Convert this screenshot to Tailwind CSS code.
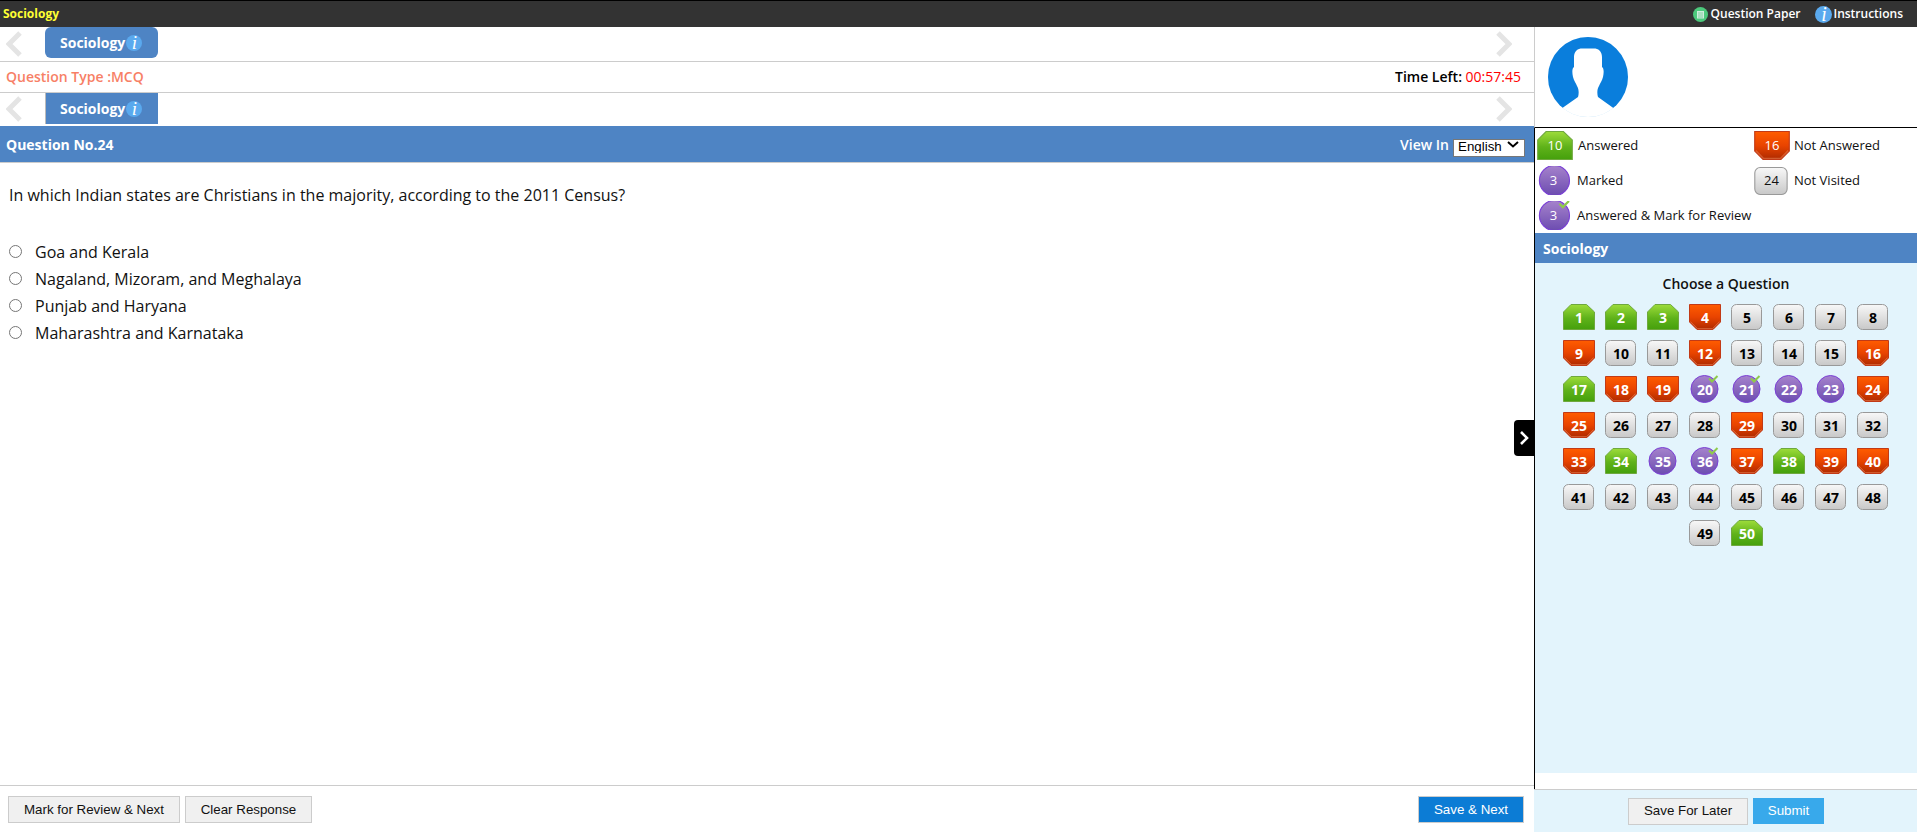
<!DOCTYPE html>
<html lang="en">
<head>
    <meta charset="UTF-8">
    <title>Sociology</title>
    <script src="https://cdn.jsdelivr.net/npm/@tailwindcss/browser@4"></script>
</head>
<body class="bg-white font-['Open_Sans',sans-serif] text-[#111] overflow-hidden">
    <!-- Shared shapes for the question status icons -->
    <svg class="absolute w-0 h-0">
        <defs>
            <linearGradient id="gAns" x1="0" y1="0" x2="0" y2="1"><stop offset="0" stop-color="#9ddc3a"/><stop offset="0.55" stop-color="#5fb21a"/><stop offset="1" stop-color="#45a00c"/></linearGradient>
            <linearGradient id="gNot" x1="0" y1="0" x2="0" y2="1"><stop offset="0" stop-color="#ff5c00"/><stop offset="0.5" stop-color="#e94400"/><stop offset="1" stop-color="#ae2a00"/></linearGradient>
            <linearGradient id="gNew" x1="0" y1="0" x2="0" y2="1"><stop offset="0" stop-color="#f8f8f8"/><stop offset="1" stop-color="#c8c8c8"/></linearGradient>
            <linearGradient id="gMark" x1="0" y1="0" x2="0" y2="1"><stop offset="0" stop-color="#a683cc"/><stop offset="1" stop-color="#6c4cb0"/></linearGradient>
            <symbol id="ans" viewBox="0 0 32 26"><polygon points="0.5,25.5 0.5,8 8,0.5 23.5,0.5 31.5,8 31.5,25.5" fill="url(#gAns)" stroke="#6fa83e"/></symbol>
            <symbol id="not" viewBox="0 0 32 26"><polygon points="0.5,0.5 31.5,0.5 31.5,18 24,25.5 8,25.5 0.5,18" fill="url(#gNot)" stroke="#c23a16"/><polyline points="1.5,17.5 8.5,24.5 23.5,24.5 30.5,17.5" fill="none" stroke="#f08a5a" stroke-opacity="0.5"/></symbol>
            <symbol id="new" viewBox="0 0 32 26"><rect x="0.5" y="0.5" width="30" height="25" rx="5" fill="url(#gNew)" stroke="#999"/></symbol>
            <symbol id="mark" viewBox="0 0 32 26" overflow="visible"><circle cx="15.5" cy="13" r="13.5" fill="url(#gMark)" stroke="#7a3fd6" stroke-width="1"/></symbol>
            <symbol id="done" viewBox="0 0 32 26" overflow="visible"><circle cx="15.5" cy="13" r="13.5" fill="url(#gMark)" stroke="#7a3fd6" stroke-width="1"/><polyline points="20,2.5 23,5.5 28.5,0" fill="none" stroke="#8fca4a" stroke-width="2"/></symbol>
        </defs>
    </svg>

    <!-- Top bar -->
    <header class="h-[27px] bg-[#333] border-t border-black flex items-center justify-between text-white">
        <span class="pl-[3px] text-[12px] font-bold text-[#ffff33]">Sociology</span>
        <div class="flex items-center text-[12px] font-semibold pr-[14px]">
            <svg class="w-[15px] h-[15px] mr-[3px]" viewBox="0 0 15 15"><circle cx="7.5" cy="7.5" r="7.5" fill="#4cc97c"/><rect x="4" y="4" width="7" height="7.5" fill="#cfeedd"/><path d="M5 6h5M5 8h5M5 10h5" stroke="#6fc795" stroke-width="0.8"/></svg>
            <span>Question Paper</span>
            <span class="ml-[15px] w-[17px] h-[17px] rounded-full bg-[#5aa9ee] flex items-center justify-center font-['Liberation_Serif',serif] italic text-[20px] font-normal leading-none">i</span>
            <span class="ml-[1px]">Instructions</span>
        </div>
    </header>

    <main class="relative flex h-[805px]">
        <!-- Question side -->
        <section class="w-[1534px] flex flex-col">
            <div class="h-[35px] border-b border-[#ccc] flex items-center justify-between pl-[6px] pr-[22px]">
                <svg class="w-[16px] h-[26px]" viewBox="0 0 16 26"><polyline points="14,2 3,13 14,24" fill="none" stroke="#e4e4e4" stroke-width="5"/></svg>
                <div class="mr-auto ml-[23px] mt-[-3px] w-[113px] h-[31px] rounded-[6px] bg-[#4e84c4] flex items-center pl-[15px] text-white text-[14px] font-bold">
                    Sociology<span class="ml-[1px] w-[16px] h-[16px] rounded-full bg-[#5aa9ee] flex items-center justify-center font-['Liberation_Serif',serif] italic text-[19px] font-normal leading-none">i</span>
                </div>
                <svg class="w-[16px] h-[26px]" viewBox="0 0 16 26"><polyline points="2,2 13,13 2,24" fill="none" stroke="#e4e4e4" stroke-width="5"/></svg>
            </div>
            <div class="h-[31px] border-b border-[#ccc] flex items-center justify-between pl-[6px] pr-[13px] pb-[2px] text-[14px]">
                <span class="font-semibold text-[#f77f66]">Question Type :MCQ</span>
                <span class="font-semibold text-black">Time Left: <span class="font-medium text-[#ff0000]">00:57:45</span></span>
            </div>
            <div class="h-[33px] flex items-start justify-between pl-[6px] pr-[22px]">
                <svg class="w-[16px] h-[26px] mt-[3px]" viewBox="0 0 16 26"><polyline points="14,2 3,13 14,24" fill="none" stroke="#e4e4e4" stroke-width="5"/></svg>
                <div class="mr-auto ml-[23px] w-[113px] h-[31px] border-l border-[#bbb] bg-[#4e84c4] flex items-center pl-[14px] text-white text-[14px] font-bold">
                    Sociology<span class="ml-[1px] w-[16px] h-[16px] rounded-full bg-[#5aa9ee] flex items-center justify-center font-['Liberation_Serif',serif] italic text-[19px] font-normal leading-none">i</span>
                </div>
                <svg class="w-[16px] h-[26px] mt-[3px]" viewBox="0 0 16 26"><polyline points="2,2 13,13 2,24" fill="none" stroke="#e4e4e4" stroke-width="5"/></svg>
            </div>
            <div class="h-[37px] bg-[#4e84c4] border-b border-[#ccc] flex items-center justify-between pl-[6px] pr-[9px] text-white text-[14px] font-bold">
                <span>Question No.24</span>
                <div class="flex items-center">
                    <span class="font-semibold">View In</span>
                    <div class="relative ml-[4px] w-[72px] h-[18px]">
                        <select class="appearance-none w-full h-full pl-[4px] pb-[2px] bg-white border border-[#777] text-black font-['Liberation_Sans',sans-serif] text-[13.33px] font-normal leading-none">
                            <option>English</option>
                        </select>
                        <svg class="absolute right-[6px] top-[6px] w-[12px] h-[7px] pointer-events-none" viewBox="0 0 12 7"><polyline points="1,1 6,5.5 11,1" fill="none" stroke="#000" stroke-width="2"/></svg>
                    </div>
                </div>
            </div>

            <div class="flex-1 pl-[9px] pt-[21px] text-[16px]">
                <p class="h-[22px] leading-[22px]">In which Indian states are Christians in the majority, according to the 2011 Census?</p>
                <div class="mt-[32px] flex flex-col">
                    <label class="h-[27px] flex items-center"><input type="radio" name="opt" class="w-[13px] h-[13px] m-0"><span class="ml-[13px]">Goa and Kerala</span></label>
                    <label class="h-[27px] flex items-center"><input type="radio" name="opt" class="w-[13px] h-[13px] m-0"><span class="ml-[13px]">Nagaland, Mizoram, and Meghalaya</span></label>
                    <label class="h-[27px] flex items-center"><input type="radio" name="opt" class="w-[13px] h-[13px] m-0"><span class="ml-[13px]">Punjab and Haryana</span></label>
                    <label class="h-[27px] flex items-center"><input type="radio" name="opt" class="w-[13px] h-[13px] m-0"><span class="ml-[13px]">Maharashtra and Karnataka</span></label>
                </div>
            </div>

            <footer class="h-[47px] border-t border-[#ccc] flex items-start pt-[10px] pl-[8px] pr-[10px] font-['Liberation_Sans',sans-serif] text-[13.33px]">
                <button class="w-[172px] h-[27px] bg-[#f0f0f0] border border-[#ccc] text-[#111]">Mark for Review &amp; Next</button>
                <button class="ml-[5px] w-[127px] h-[27px] bg-[#f0f0f0] border border-[#ccc] text-[#111]">Clear Response</button>
                <button class="ml-auto w-[106px] h-[27px] bg-[#0c7cd5] border border-[#ccc] text-white">Save &amp; Next</button>
            </footer>
        </section>

        <!-- Black tab that collapses the palette -->
        <div class="absolute left-[1514px] top-[393px] w-[20px] h-[36px] bg-black rounded-l-[4px] flex items-center justify-center">
            <svg class="w-[10px] h-[16px]" viewBox="0 0 10 16"><polyline points="2,2 8,8 2,14" fill="none" stroke="#fff" stroke-width="2.6"/></svg>
        </div>

        <!-- Palette side -->
        <aside class="w-[383px] flex flex-col">
            <div class="h-[101px] border-l border-l-[#ccc] border-b border-b-black pl-[13px] pt-[10px]">
                <svg class="w-[80px] h-[80px]" viewBox="0 0 80 80">
                    <defs><clipPath id="round"><circle cx="40" cy="40" r="40"/></clipPath></defs>
                    <circle cx="40" cy="40" r="39.6" fill="#fff" stroke="#b5dcf6" stroke-width="0.8"/>
                    <g clip-path="url(#round)">
                        <rect width="80" height="71" fill="#0a7edc"/>
                        <path d="M26 20C26 14 30 11.5 34 11.5H46C50 11.5 54 14 54 20V30C56 31 56 36 55 40C54 44 52 46 51 49C49 52 49 57 50 60L65 70.7L80 90H0L14.7 70.7L30 60C31 57 31 52 29 49C28 46 26 44 25 40C24 36 24 31 26 30Z" fill="#fff"/>
                    </g>
                </svg>
            </div>

            <div class="flex-1 border-l border-black flex flex-col">
                <div class="h-[105px] pl-[2px] text-[13px] text-[#111]">
                    <div class="h-[35px] flex items-center">
                        <div class="w-[217px] flex items-center">
                            <div class="relative w-[36px] h-[29px] flex items-center justify-center text-white"><svg class="absolute inset-0 w-full h-full" preserveAspectRatio="none"><use href="#ans"/></svg><span class="relative">10</span></div>
                            <span class="ml-[5px]">Answered</span>
                        </div>
                        <div class="relative w-[36px] h-[29px] flex items-center justify-center text-white"><svg class="absolute inset-0 w-full h-full" preserveAspectRatio="none"><use href="#not"/></svg><span class="relative">16</span></div>
                        <span class="ml-[4px]">Not Answered</span>
                    </div>
                    <div class="h-[35px] flex items-center">
                        <div class="w-[217px] flex items-center">
                            <div class="relative w-[36px] h-[29px] flex items-center justify-center text-white"><svg class="absolute inset-0 w-full h-full"><use href="#mark"/></svg><span class="relative -ml-[3px]">3</span></div>
                            <span class="ml-[4px]">Marked</span>
                        </div>
                        <div class="relative w-[35px] h-[28px] flex items-center justify-center text-[#111]"><svg class="absolute inset-0 w-full h-full" preserveAspectRatio="none"><use href="#new"/></svg><span class="relative">24</span></div>
                        <span class="ml-[5px]">Not Visited</span>
                    </div>
                    <div class="h-[35px] flex items-center">
                        <div class="relative w-[36px] h-[29px] flex items-center justify-center text-white"><svg class="absolute inset-0 w-full h-full"><use href="#done"/></svg><span class="relative -ml-[3px]">3</span></div>
                        <span class="ml-[4px]">Answered &amp; Mark for Review</span>
                    </div>
                </div>
                <div class="h-[30px] bg-[#4e84c4] flex items-center pl-[8px] text-white text-[14px] font-bold">Sociology</div>
                <div class="h-[510px] bg-[#e3f4fc] pt-[11px]">
                    <h3 class="h-[19px] leading-[19px] text-center text-[14px] font-semibold text-[#111]">Choose a Question</h3>
                    <div id="palette" class="mt-[6px] w-[336px] mx-auto flex flex-wrap justify-center text-[14px] font-bold"></div>
                </div>
                <div class="flex-1"></div>
            </div>

            <div class="h-[43px] border-t border-[#ccc] bg-[#e3f4fc] flex items-center pl-[94px] font-['Liberation_Sans',sans-serif] text-[13.33px]">
                <button class="w-[120px] h-[27px] bg-[#f0f0f0] border border-[#ccc] text-[#111]">Save For Later</button>
                <button class="ml-[5px] w-[71px] h-[26px] bg-[#38a9eb] text-white">Submit</button>
            </div>
        </aside>
    </main>

    <script>
        // a = answered, n = not answered, v = not visited, m = marked, d = answered and marked
        const states = 'aaanvvvv nvvnvvvn annddmmn nvvvnvvv namdnann vvvvvvvv va'.replace(/ /g, '');
        const shapes = { a: 'ans', n: 'not', v: 'new', m: 'mark', d: 'done' };
        const colors = { a: 'text-white', n: 'text-white', v: 'text-black', m: 'text-white', d: 'text-white' };

        document.getElementById('palette').innerHTML = [...states].map((s, i) => `
            <div class="w-[42px] h-[36px] flex items-center justify-center">
                <div class="relative w-[32px] h-[26px] flex items-center justify-center ${colors[s]}">
                    <svg class="absolute inset-0 w-full h-full overflow-visible"><use href="#${shapes[s]}"/></svg>
                    <span class="relative">${i + 1}</span>
                </div>
            </div>`).join('');
    </script>
</body>
</html>
